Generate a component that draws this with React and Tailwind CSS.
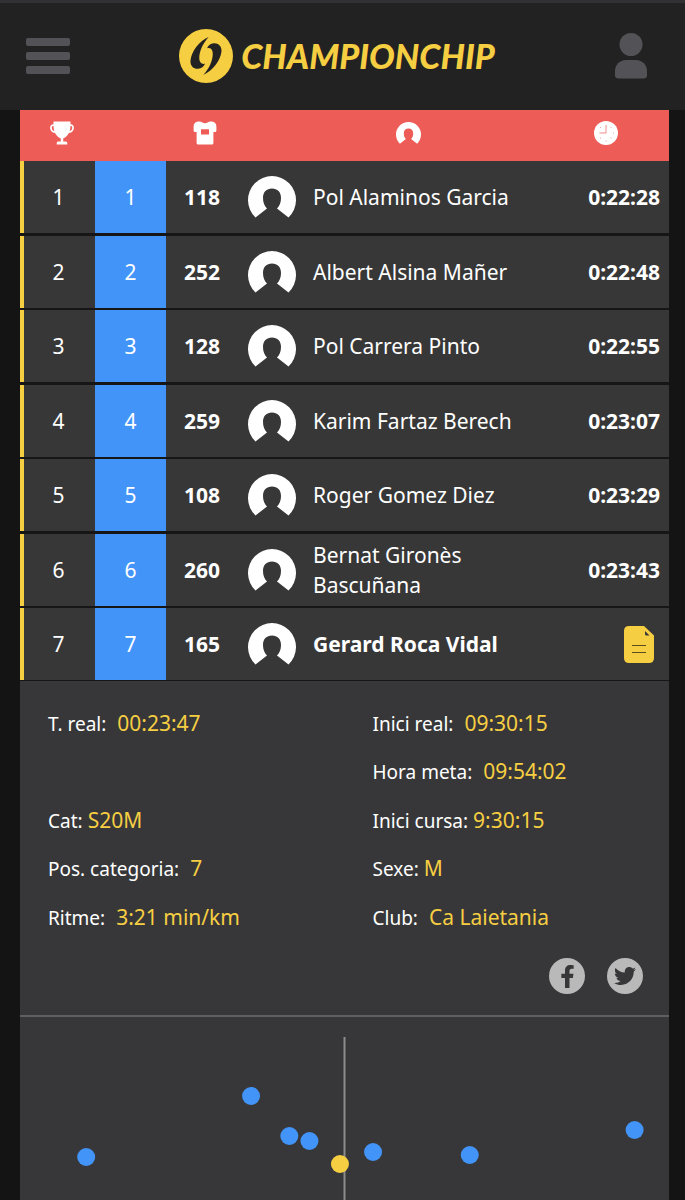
import { useState } from "react";
import { FaFacebookF, FaTwitter } from "react-icons/fa";

const RUNNERS = [
  { pos: 1, catPos: 1, bib: 118, name: "Pol Alaminos Garcia", time: "0:22:28" },
  { pos: 2, catPos: 2, bib: 252, name: "Albert Alsina Mañer", time: "0:22:48" },
  { pos: 3, catPos: 3, bib: 128, name: "Pol Carrera Pinto", time: "0:22:55" },
  { pos: 4, catPos: 4, bib: 259, name: "Karim Fartaz Berech", time: "0:23:07" },
  { pos: 5, catPos: 5, bib: 108, name: "Roger Gomez Diez", time: "0:23:29" },
  { pos: 6, catPos: 6, bib: 260, name: "Bernat Gironès Bascuñana", time: "0:23:43" },
  { pos: 7, catPos: 7, bib: 165, name: "Gerard Roca Vidal", time: "0:23:47" },
];

// null keeps the grid cell empty
const DETAILS = [
  { label: "T. real:", value: "00:23:47", wide: true },
  { label: "Inici real:", value: "09:30:15", wide: true },
  null,
  { label: "Hora meta:", value: "09:54:02", wide: true },
  { label: "Cat:", value: "S20M" },
  { label: "Inici cursa:", value: "9:30:15" },
  { label: "Pos. categoria:", value: "7", wide: true },
  { label: "Sexe:", value: "M" },
  { label: "Ritme:", value: "3:21 min/km", wide: true },
  { label: "Club:", value: "Ca Laietania", wide: true },
];

// x in % of the chart width, y in px
const POINTS = [
  { x: 10.2, y: 140 },
  { x: 35.6, y: 79 },
  { x: 41.5, y: 119 },
  { x: 44.6, y: 124 },
  { x: 54.4, y: 135 },
  { x: 69.3, y: 138 },
  { x: 94.7, y: 113 },
];

function LogoMark() {
  return (
    <svg viewBox="0 0 160 160" className="w-[54px] h-[54px]" aria-hidden="true">
      <circle cx="80" cy="80" r="80" fill="#f6ce42" />
      <g fill="#222">
        <path d="M88 24C60 36 37 66 34 94C33 110 44 119 57 118C67 117 73 112 77 103C66 105 60 99 60 87C60 66 70 44 88 24Z" />
        <path d="M88 24C60 36 37 66 34 94C33 110 44 119 57 118C67 117 73 112 77 103C66 105 60 99 60 87C60 66 70 44 88 24Z" transform="rotate(180 80 80)" />
      </g>
    </svg>
  );
}

function UserIcon() {
  return (
    <svg viewBox="0 0 32 46" className="w-8 h-[46px]" fill="#535256" aria-hidden="true">
      <circle cx="16" cy="11.500" r="11.500" />
      <path d="M11 27H21C27.500 27 32 32 32 38V42Q32 45.500 28.500 45.500H3.500Q0 45.500 0 42V38C0 32 4.500 27 11 27Z" />
    </svg>
  );
}

function TrophyIcon() {
  return (
    <svg viewBox="0 0 24 24" className="w-6 h-6" fill="#fff" aria-hidden="true">
      <path d="M3.500 .5H20.500V4C20.500 10.500 18.500 15 13.200 17.500V20.500H16Q17.300 20.700 17.300 22.200V23.500H6.700V22.200Q6.700 20.700 8 20.500H10.800V17.500C5.500 15 3.500 10.500 3.500 4Z" />
      <path d="M4.500 4.200C-.5 2.800-.5 11 6 11.200M19.500 4.200C24.500 2.800 24.500 11 18 11.200" fill="none" stroke="#fff" strokeWidth="1.700" />
    </svg>
  );
}

function ShirtIcon() {
  return (
    <svg viewBox="0 0 24 24" className="w-6 h-6" fill="#fff" aria-hidden="true">
      <path fillRule="evenodd" d="M4 .8C6 .2 8 .3 9 1.200Q12 3.200 15 1.200C16 .3 18 .2 20 .8C22.500 1.500 23.500 3.500 23.400 6V9.500Q23.400 11 21.900 11H20.400V22Q20.400 23.500 18.900 23.500H5.100Q3.600 23.500 3.600 22V11H2.100Q.6 11 .6 9.500V6C.5 3.500 1.500 1.500 4 .8ZM8 8.200V13.600H16V8.200Z" />
    </svg>
  );
}

// ring open at the bottom with a head cut out of it
function PersonIcon({ className }) {
  return (
    <svg viewBox="0 -1 48 42" className={className} fill="#fff" aria-hidden="true">
      <path d="M7.500 40.500A24 24 0 1 1 40.500 40.500L29 31.500C31.500 29 33 25.500 33 21C33 15 29.500 11.500 24 11.500S15 15 15 21C15 25.500 16.500 29 19 31.500Z" />
    </svg>
  );
}

function ClockIcon() {
  return (
    <svg viewBox="0 0 24 24" className="w-6 h-6" aria-hidden="true">
      <circle cx="12" cy="12" r="12" fill="#fff" />
      <path d="M12 4V12H5.500" fill="none" stroke="#ed5c57" strokeWidth=".7" />
      <g fill="#ed8a86">
        <circle cx="17" cy="6.500" r=".5" />
        <circle cx="19.500" cy="12" r=".5" />
        <circle cx="17" cy="17" r=".5" />
        <circle cx="12" cy="20" r=".5" />
        <circle cx="6.500" cy="17" r=".5" />
        <circle cx="6.500" cy="6.500" r=".5" />
      </g>
    </svg>
  );
}

function DocumentIcon() {
  return (
    <svg viewBox="0 0 30 37" className="w-[30px] h-[37px]" aria-hidden="true">
      <path d="M5 0H20L30 9.500V32Q30 37 25 37H5Q0 37 0 32V5Q0 0 5 0Z" fill="#f6ce42" />
      <path d="M21 5L25.500 9.500H22.500Q21 9.500 21 8Z" fill="#373737" />
      <path d="M8 19.500H22M8 26.500H22" stroke="#5a4c20" strokeWidth="1" />
    </svg>
  );
}

function rowBorder(i) {
  if (i === RUNNERS.length - 1) return "border-b border-[#161616]";
  return i % 2 ? "border-b-2 border-[#161616]" : "border-b-3 border-[#161616]";
}

function ResultsTable({ selected, onToggle }) {
  return (
    <table className="w-full table-fixed border-separate border-spacing-0 text-[21px] leading-[30px]">
      <colgroup>
        <col className="w-[75px]" />
        <col className="w-[71px]" />
        <col className="w-[72px]" />
        <col className="w-[75px]" />
        <col />
        <col className="w-[126px]" />
      </colgroup>
      <thead>
        <tr className="h-[51px] bg-[#ed5c57]">
          <th scope="col" aria-label="Posició" className="pl-2 pb-1.5">
            <div className="flex justify-center"><TrophyIcon /></div>
          </th>
          <th aria-hidden="true"></th>
          <th scope="col" aria-label="Dorsal" className="pl-1.5 pb-1.5">
            <div className="flex justify-center"><ShirtIcon /></div>
          </th>
          <th scope="col" colSpan={2} aria-label="Nom" className="pl-9 pb-1.5">
            <div className="flex justify-center"><PersonIcon className="w-[25px] h-[22px]" /></div>
          </th>
          <th scope="col" aria-label="Temps" className="pb-1.5">
            <div className="flex justify-center"><ClockIcon /></div>
          </th>
        </tr>
      </thead>
      <tbody>
        {RUNNERS.map((r, i) => {
          const active = r.bib === selected;
          const border = rowBorder(i);
          return (
            <tr key={r.bib} className="bg-[#373737]">
              <td className={`p-0 ${border}`}>
                <div className="flex items-center justify-center h-[72px] pr-0.5 border-l-4 border-[#f6ce42]">{r.pos}</div>
              </td>
              <td className={`p-0 text-center bg-[#4394f8] ${border}`}>{r.catPos}</td>
              <td className={`p-0 text-center font-bold ${border}`}>{r.bib}</td>
              <td className={`p-0 pl-2.5 ${border}`}>
                <PersonIcon className="w-12 h-[42px]" />
              </td>
              <td className={`p-0 ${border} ${active ? "font-bold" : ""}`}>{r.name}</td>
              <td className={`p-0 pr-[9px] text-right font-bold ${border}`}>
                {active ? (
                  <button type="button" aria-label="Detalls" onClick={onToggle} className="block ml-auto mr-1.5">
                    <DocumentIcon />
                  </button>
                ) : (
                  r.time
                )}
              </td>
            </tr>
          );
        })}
      </tbody>
    </table>
  );
}

function RunnerDetails() {
  return (
    <section className="pt-[18px] pb-[21px] border-b-2 border-[#5f5f60]">
      <dl className="grid grid-cols-2 auto-rows-fr h-[242px]">
        {DETAILS.map((d, i) =>
          d ? (
            <div key={d.label} className={`flex items-baseline pl-7 ${d.wide ? "gap-[11px]" : "gap-[5px]"}`}>
              <dt className="text-[19px] leading-[48px]">{d.label}</dt>
              <dd className="text-[21px] leading-[48px] text-[#f6ce42]">{d.value}</dd>
            </div>
          ) : (
            <div key={i} />
          )
        )}
      </dl>
      <div className="flex justify-end gap-[22px] pt-[17px] pr-[26px]">
        <a href="#facebook" aria-label="Facebook" className="flex items-center justify-center size-9 rounded-full bg-[#b9b9b9] text-[#373739]">
          <FaFacebookF size={23} />
        </a>
        <a href="#twitter" aria-label="Twitter" className="flex items-center justify-center size-9 rounded-full bg-[#b9b9b9] text-[#373739]">
          <FaTwitter size={22} />
        </a>
      </div>
    </section>
  );
}

function RaceChart() {
  return (
    <svg className="block w-full h-[183px]" role="img" aria-label="Gràfic de corredors">
      <line x1="50%" y1="20" x2="50%" y2="183" stroke="#8c8c8c" strokeWidth="2" />
      {POINTS.map((p) => (
        <circle key={p.x} cx={`${p.x}%`} cy={p.y} r="9" fill="#4394f8" />
      ))}
      <circle cx="49.3%" cy="147" r="9" fill="#f6ce42" />
    </svg>
  );
}

export default function App() {
  const [open, setOpen] = useState(true);

  return (
    <div className="min-h-screen bg-[#141414] text-white font-['Noto_Sans','Open_Sans',sans-serif]">
      <header className="flex items-center justify-between h-[110px] px-[26px] pb-0.5 bg-[#222] border-t-3 border-[#313133]">
        <button type="button" aria-label="Menú" className="flex flex-col gap-1.5 w-11">
          <span className="h-2 w-full rounded-xs bg-[#535256]" />
          <span className="h-2 w-full rounded-xs bg-[#535256]" />
          <span className="h-2 w-full rounded-xs bg-[#535256]" />
        </button>
        <a href="#inici" className="flex items-center gap-2 text-[#f6ce42]">
          <LogoMark />
          <span className="font-['Lato',sans-serif] font-black italic text-[34px] leading-10">CHAMPIONCHIP</span>
        </a>
        <button type="button" aria-label="Usuari" className="flex justify-center w-[55px]">
          <UserIcon />
        </button>
      </header>

      <main className="ml-5 mr-4 bg-[#373739]">
        <ResultsTable selected={165} onToggle={() => setOpen(!open)} />
        {open && <RunnerDetails />}
        <RaceChart />
      </main>
    </div>
  );
}
